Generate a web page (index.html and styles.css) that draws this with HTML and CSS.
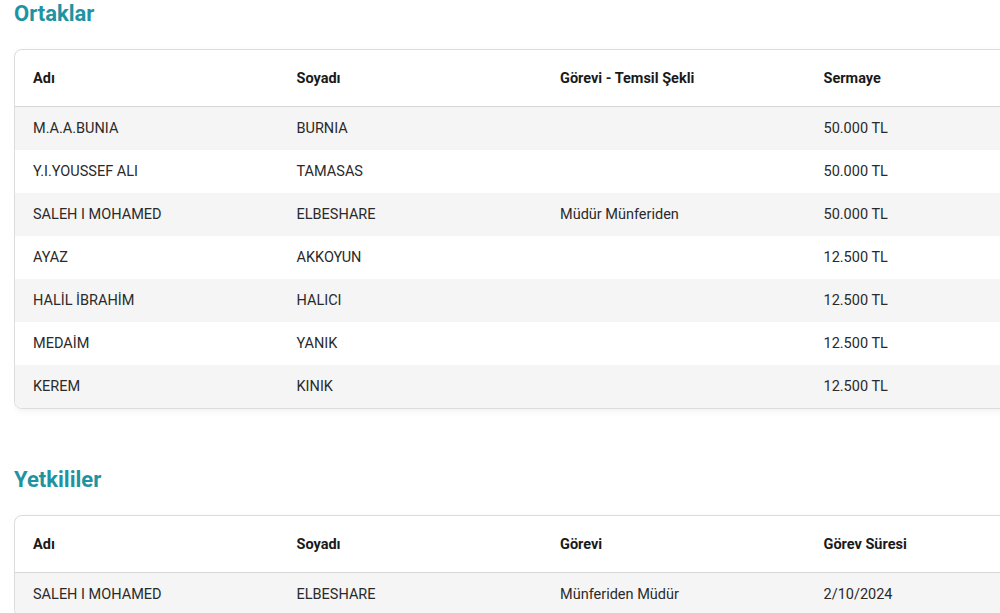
FILE: index.html
```html
<!DOCTYPE html>
<html lang="tr">
<head>
<meta charset="utf-8">
<link rel="stylesheet" href="styles.css">
</head>
<body>
<main class="page">
  <section class="section">
    <h2 class="title">Ortaklar</h2>
    <div class="card">
      <table class="table">
        <thead>
          <tr><th>Adı</th><th>Soyadı</th><th>Görevi - Temsil Şekli</th><th>Sermaye</th></tr>
        </thead>
        <tbody>
          <tr><td>M.A.A.BUNIA</td><td>BURNIA</td><td></td><td>50.000 TL</td></tr>
          <tr><td>Y.I.YOUSSEF ALI</td><td>TAMASAS</td><td></td><td>50.000 TL</td></tr>
          <tr><td>SALEH I MOHAMED</td><td>ELBESHARE</td><td>Müdür Münferiden</td><td>50.000 TL</td></tr>
          <tr><td>AYAZ</td><td>AKKOYUN</td><td></td><td>12.500 TL</td></tr>
          <tr><td>HALİL İBRAHİM</td><td>HALICI</td><td></td><td>12.500 TL</td></tr>
          <tr><td>MEDAİM</td><td>YANIK</td><td></td><td>12.500 TL</td></tr>
          <tr><td>KEREM</td><td>KINIK</td><td></td><td>12.500 TL</td></tr>
        </tbody>
      </table>
    </div>
  </section>
  <section class="section section-second">
    <h2 class="title">Yetkililer</h2>
    <div class="card">
      <table class="table">
        <thead>
          <tr><th>Adı</th><th>Soyadı</th><th>Görevi</th><th>Görev Süresi</th></tr>
        </thead>
        <tbody>
          <tr><td>SALEH I MOHAMED</td><td>ELBESHARE</td><td>Münferiden Müdür</td><td>2/10/2024</td></tr>
        </tbody>
      </table>
    </div>
  </section>
</main>
</body>
</html>
```
FILE: styles.css
```css
html, body {
  margin: 0;
  padding: 0;
  background: #ffffff;
  overflow: hidden;
}
body {
  font-family: Roboto, "Liberation Sans", Arial, sans-serif;
  color: #222222;
  width: 1000px;
  height: 613px;
}
.page {
  margin-left: 14px;
  width: 986px;
  height: 613px;
  overflow: hidden;
}
.title {
  margin: 0;
  padding-top: 1px;
  font-size: 22px;
  line-height: 26px;
  font-weight: 700;
  color: #1f93a1;
}
.card {
  margin-top: 22px;
  width: 1054px;
  border: 1px solid #dcdcdc;
  border-radius: 8px;
  box-shadow: 0 2px 6px rgba(0,0,0,0.06);
  overflow: hidden;
  background: #fff;
}
.section-second {
  margin-top: 57px;
}
.table {
  border-collapse: collapse;
  width: 1054px;
  table-layout: fixed;
  font-size: 14.5px;
}
.table th, .table td {
  text-align: left;
  padding: 0 0 0 18px;
  white-space: nowrap;
}
.table th {
  height: 56px;
  font-size: 14.5px;
  font-weight: 700;
  color: #1a1a1a;
  border-bottom: 1px solid #d6d6d6;
}
.table td {
  height: 43px;
  color: #2a2a2a;
}
.table tbody tr:nth-child(odd) {
  background: #f5f5f5;
}
.table tbody tr:nth-child(even) {
  background: #ffffff;
}
```
